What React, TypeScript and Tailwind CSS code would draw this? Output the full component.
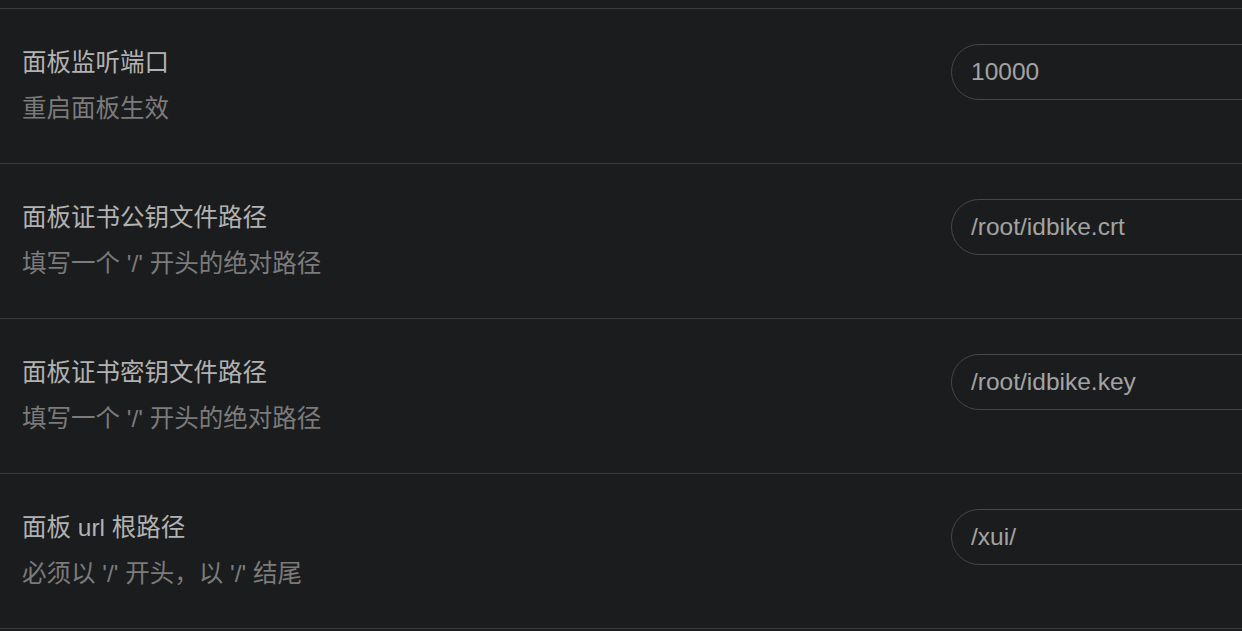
import React from "react";

const rows = [
  { title: "面板监听端口", desc: "重启面板生效", value: "10000" },
  { title: "面板证书公钥文件路径", desc: "填写一个 '/' 开头的绝对路径", value: "/root/idbike.crt" },
  { title: "面板证书密钥文件路径", desc: "填写一个 '/' 开头的绝对路径", value: "/root/idbike.key" },
  { title: "面板 url 根路径", desc: "必须以 '/' 开头，以 '/' 结尾", value: "/xui/" },
];

export default function App() {
  return (
    <div
      className="min-h-screen bg-[#1b1c1e] pt-2 overflow-hidden"
      style={{ fontFamily: '"Liberation Sans", "Noto Sans CJK SC", sans-serif' }}
    >
      {rows.map((r) => (
        <div key={r.title} className="flex justify-between border-t border-[#3a3b3e] pt-[35px] pb-[37px] pl-[22px] h-[155px]">
          {/* label */}
          <div className="flex flex-col pt-px">
            <div className="text-[24.5px] leading-[36px] text-[#b2b2b2]">{r.title}</div>
            <div className="mt-[10px] text-[24.5px] leading-[36px] text-[#7b7b7b]">{r.desc}</div>
          </div>

          {/* input, cut off at the right edge */}
          <div className="w-[291px] overflow-hidden shrink-0">
            <input
              readOnly
              value={r.value}
              className="w-[400px] h-[56px] rounded-full border border-[#46474a] bg-transparent pl-[19px] text-[24.5px] text-[#a3a3a3] outline-none"
              style={{ fontFamily: '"Liberation Sans", sans-serif' }}
            />
          </div>
        </div>
      ))}
      <div className="border-t border-[#3a3b3e]" />
    </div>
  );
}
